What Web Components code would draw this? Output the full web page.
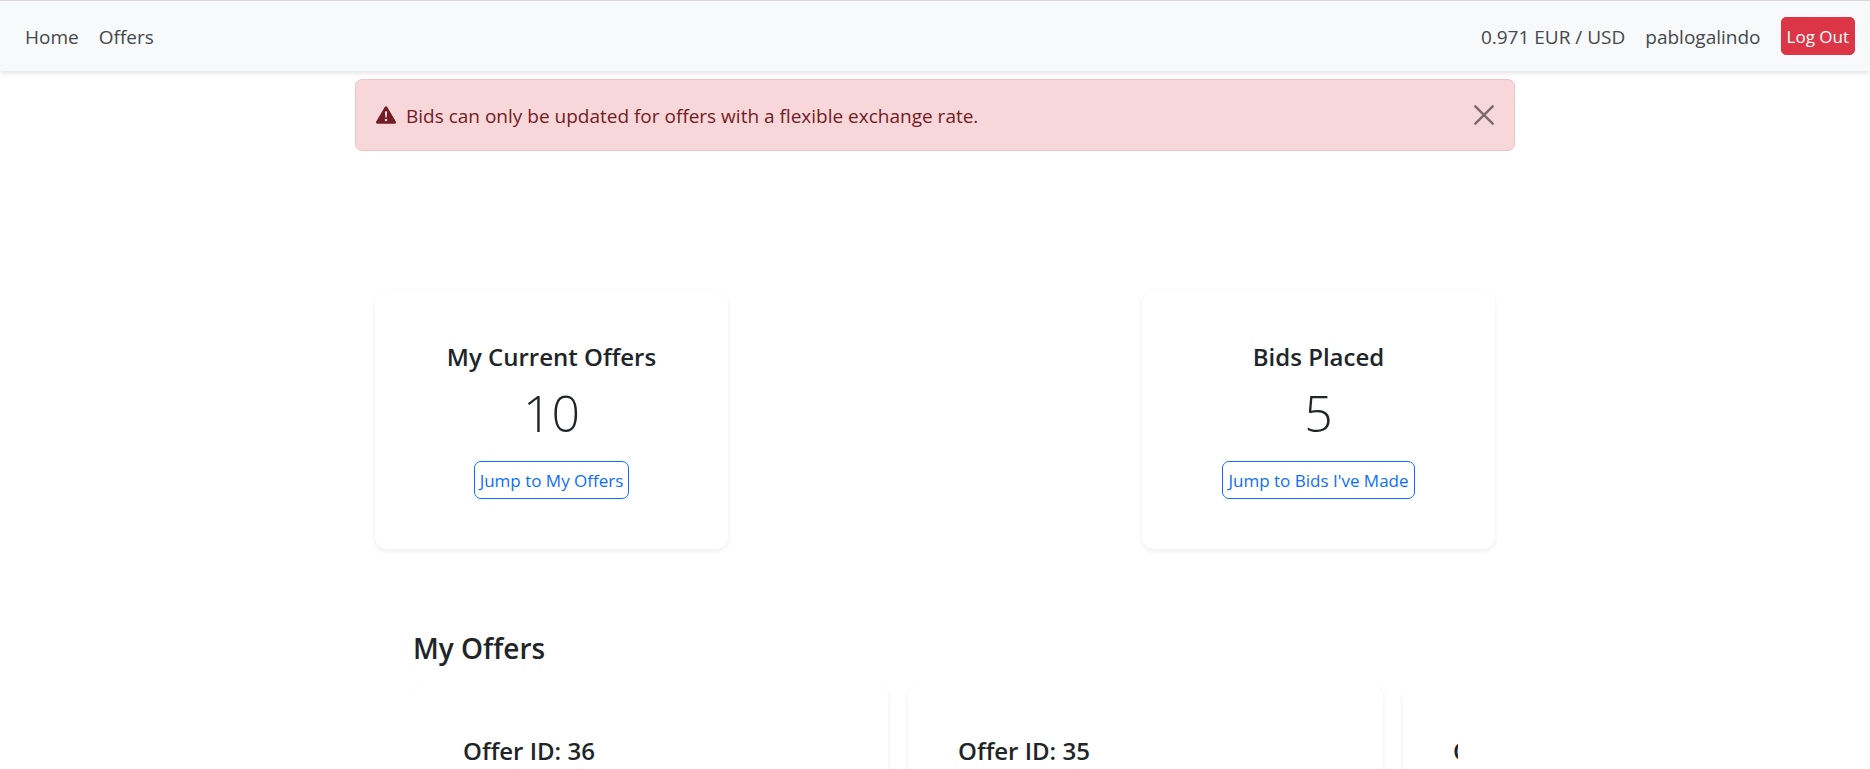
<!DOCTYPE html>
<html lang="en">
<head>
<meta charset="utf-8">
<meta name="viewport" content="width=device-width, initial-scale=1">
<title>Home</title>
<style>
  :root {
    --ink: #212529;
    --primary: #0d6efd;
    --danger: #dc3545;
    --shadow: 0 2px 5px rgba(0, 0, 0, .075);
  }
  body {
    margin: 0;
    height: 100vh;
    overflow: hidden;
    background: #fff;
    color: var(--ink);
    font: 19px/30px "Open Sans", "Noto Sans", sans-serif;
  }
</style>
</head>
<body>
<app-shell>
  <nav-bar slot="header">
    <nav-link href="#home">Home</nav-link>
    <nav-link href="#offers">Offers</nav-link>
    <nav-link slot="end" href="#rate">0.971 EUR / USD</nav-link>
    <nav-link slot="end" href="#profile">pablogalindo</nav-link>
    <action-button slot="end" variant="danger">Log Out</action-button>
  </nav-bar>
  <alert-banner>Bids can only be updated for offers with a flexible exchange rate.</alert-banner>
  <stat-row>
    <stat-card heading="My Current Offers" value="10"><action-button>Jump to My Offers</action-button></stat-card>
    <stat-card heading="Bids Placed" value="5"><action-button>Jump to Bids I've Made</action-button></stat-card>
  </stat-row>
  <offer-carousel heading="My Offers">
    <offer-card>Offer ID: 36</offer-card>
    <offer-card>Offer ID: 35</offer-card>
    <offer-card>Offer ID: 34</offer-card>
  </offer-carousel>
</app-shell>
<script>
  function define(name, render) {
    customElements.define(name, class extends HTMLElement {
      constructor() {
        super();
        this.attachShadow({ mode: "open" });
      }
      connectedCallback() {
        this.shadowRoot.innerHTML = render(this);
      }
    });
  }

  define("app-shell", () => `
    <style>
      :host { display: flex; flex-direction: column; height: 100%; }
      main {
        flex: 1; min-height: 0; overflow-y: auto; scrollbar-width: none;
        padding: 8px 12px 0;
      }
      .container { max-width: 1160px; margin: 0 auto; }
      header { position: relative; z-index: 1; }
    </style>
    <header><slot name="header"></slot></header>
    <main><div class="container"><slot></slot></div></main>`);

  define("nav-bar", () => `
    <style>
      :host { display: block; }
      nav {
        display: flex; justify-content: space-between; align-items: center;
        height: 70px; padding: 0 15px 0 25px;
        border-top: 1px solid #dcd8d7;
        background: #f8f9fa;
        box-shadow: 0 2px 5px rgba(0, 0, 0, .12);
        color: #43484d;
      }
      div { display: flex; align-items: center; gap: 20px; }
    </style>
    <nav>
      <div><slot></slot></div>
      <div><slot name="end"></slot></div>
    </nav>`);

  define("nav-link", (el) => `
    <style>
      :host { display: block; }
      a { display: block; padding-top: 2px; color: inherit; text-decoration: none; }
    </style>
    <a href="${el.getAttribute("href")}"><slot></slot></a>`);

  define("action-button", (el) => `
    <style>
      :host { display: inline-block; vertical-align: top; }
      button {
        display: block; box-sizing: border-box; height: 38px; padding: 2px 5px 0;
        border: 1px solid var(--primary); border-radius: 7px;
        background: transparent; color: var(--primary);
        font: 17px/26px "Open Sans", "Noto Sans", sans-serif;
        white-space: nowrap; cursor: pointer;
      }
      .danger { background: var(--danger); border-color: var(--danger); border-radius: 5px; color: #fff; }
    </style>
    <button type="button" class="${el.getAttribute("variant") || ""}"><slot></slot></button>`);

  define("alert-banner", () => `
    <style>
      :host { display: block; }
      .alert {
        display: flex; align-items: center; gap: 10px;
        padding: 19px 20px; border: 1px solid #f5c2c7; border-radius: 7px;
        background: #f8d7da; color: #721c24;
      }
      svg { display: block; width: 20px; height: 20px; flex: none; }
      p { flex: 1; margin: 0; padding-top: 2px; }
      button { padding: 0; border: 0; background: none; color: #000; opacity: .5; cursor: pointer; }
    </style>
    <div class="alert" role="alert">
      <svg viewBox="0 0 16 16" fill="currentColor" aria-hidden="true">
        <path d="M8.98 1.57a1.13 1.13 0 0 0-1.96 0L.17 13.23c-.46.78.09 1.77.98 1.77h13.71c.89 0 1.44-.99.98-1.77zM8 5c.54 0 .95.46.9.99l-.35 3.51a.55.55 0 0 1-1.1 0L7.1 5.99A.9.9 0 0 1 8 5m0 6a1 1 0 1 1 0 2 1 1 0 0 1 0-2"/>
      </svg>
      <p><slot></slot></p>
      <button type="button" aria-label="Close">
        <svg viewBox="0 0 20 20" fill="none" stroke="currentColor" stroke-width="2.4" stroke-linecap="round">
          <path d="M1.3 1.3l17.4 17.4M18.7 1.3L1.3 18.7"/>
        </svg>
      </button>
    </div>`);

  define("stat-row", () => `
    <style>
      :host { display: flex; justify-content: space-between; gap: 20px; padding: 140px 20px 80px; }
    </style>
    <slot></slot>`);

  define("stat-card", (el) => `
    <style>
      :host {
        display: block; box-sizing: border-box; flex: 0 1 353px; padding: 50px 20px;
        border-radius: 12px; box-shadow: var(--shadow); text-align: center;
      }
      h2 { margin: 0 0 10px; font-size: 24px; line-height: 32px; font-weight: 600; }
      p { margin: 0 0 18px; font-size: 50px; line-height: 60px; font-weight: 300; }
    </style>
    <h2>${el.getAttribute("heading")}</h2>
    <p>${el.getAttribute("value")}</p>
    <slot></slot>`);

  define("offer-carousel", (el) => `
    <style>
      :host { display: block; padding: 0 57px 0 58px; }
      h2 { margin: 0 0 18px; font-size: 28px; line-height: 38px; font-weight: 600; }
      .track { display: flex; gap: 20px; overflow-x: auto; scrollbar-width: none; }
    </style>
    <h2>${el.getAttribute("heading")}</h2>
    <div class="track"><slot></slot></div>`);

  define("offer-card", () => `
    <style>
      :host {
        display: block; box-sizing: border-box; flex: 0 0 475px; padding: 50px;
        border-radius: 12px; box-shadow: var(--shadow);
      }
      h3 { margin: 0; font-size: 24px; line-height: 32px; font-weight: 600; }
    </style>
    <h3><slot></slot></h3>`);
</script>
</body>
</html>
